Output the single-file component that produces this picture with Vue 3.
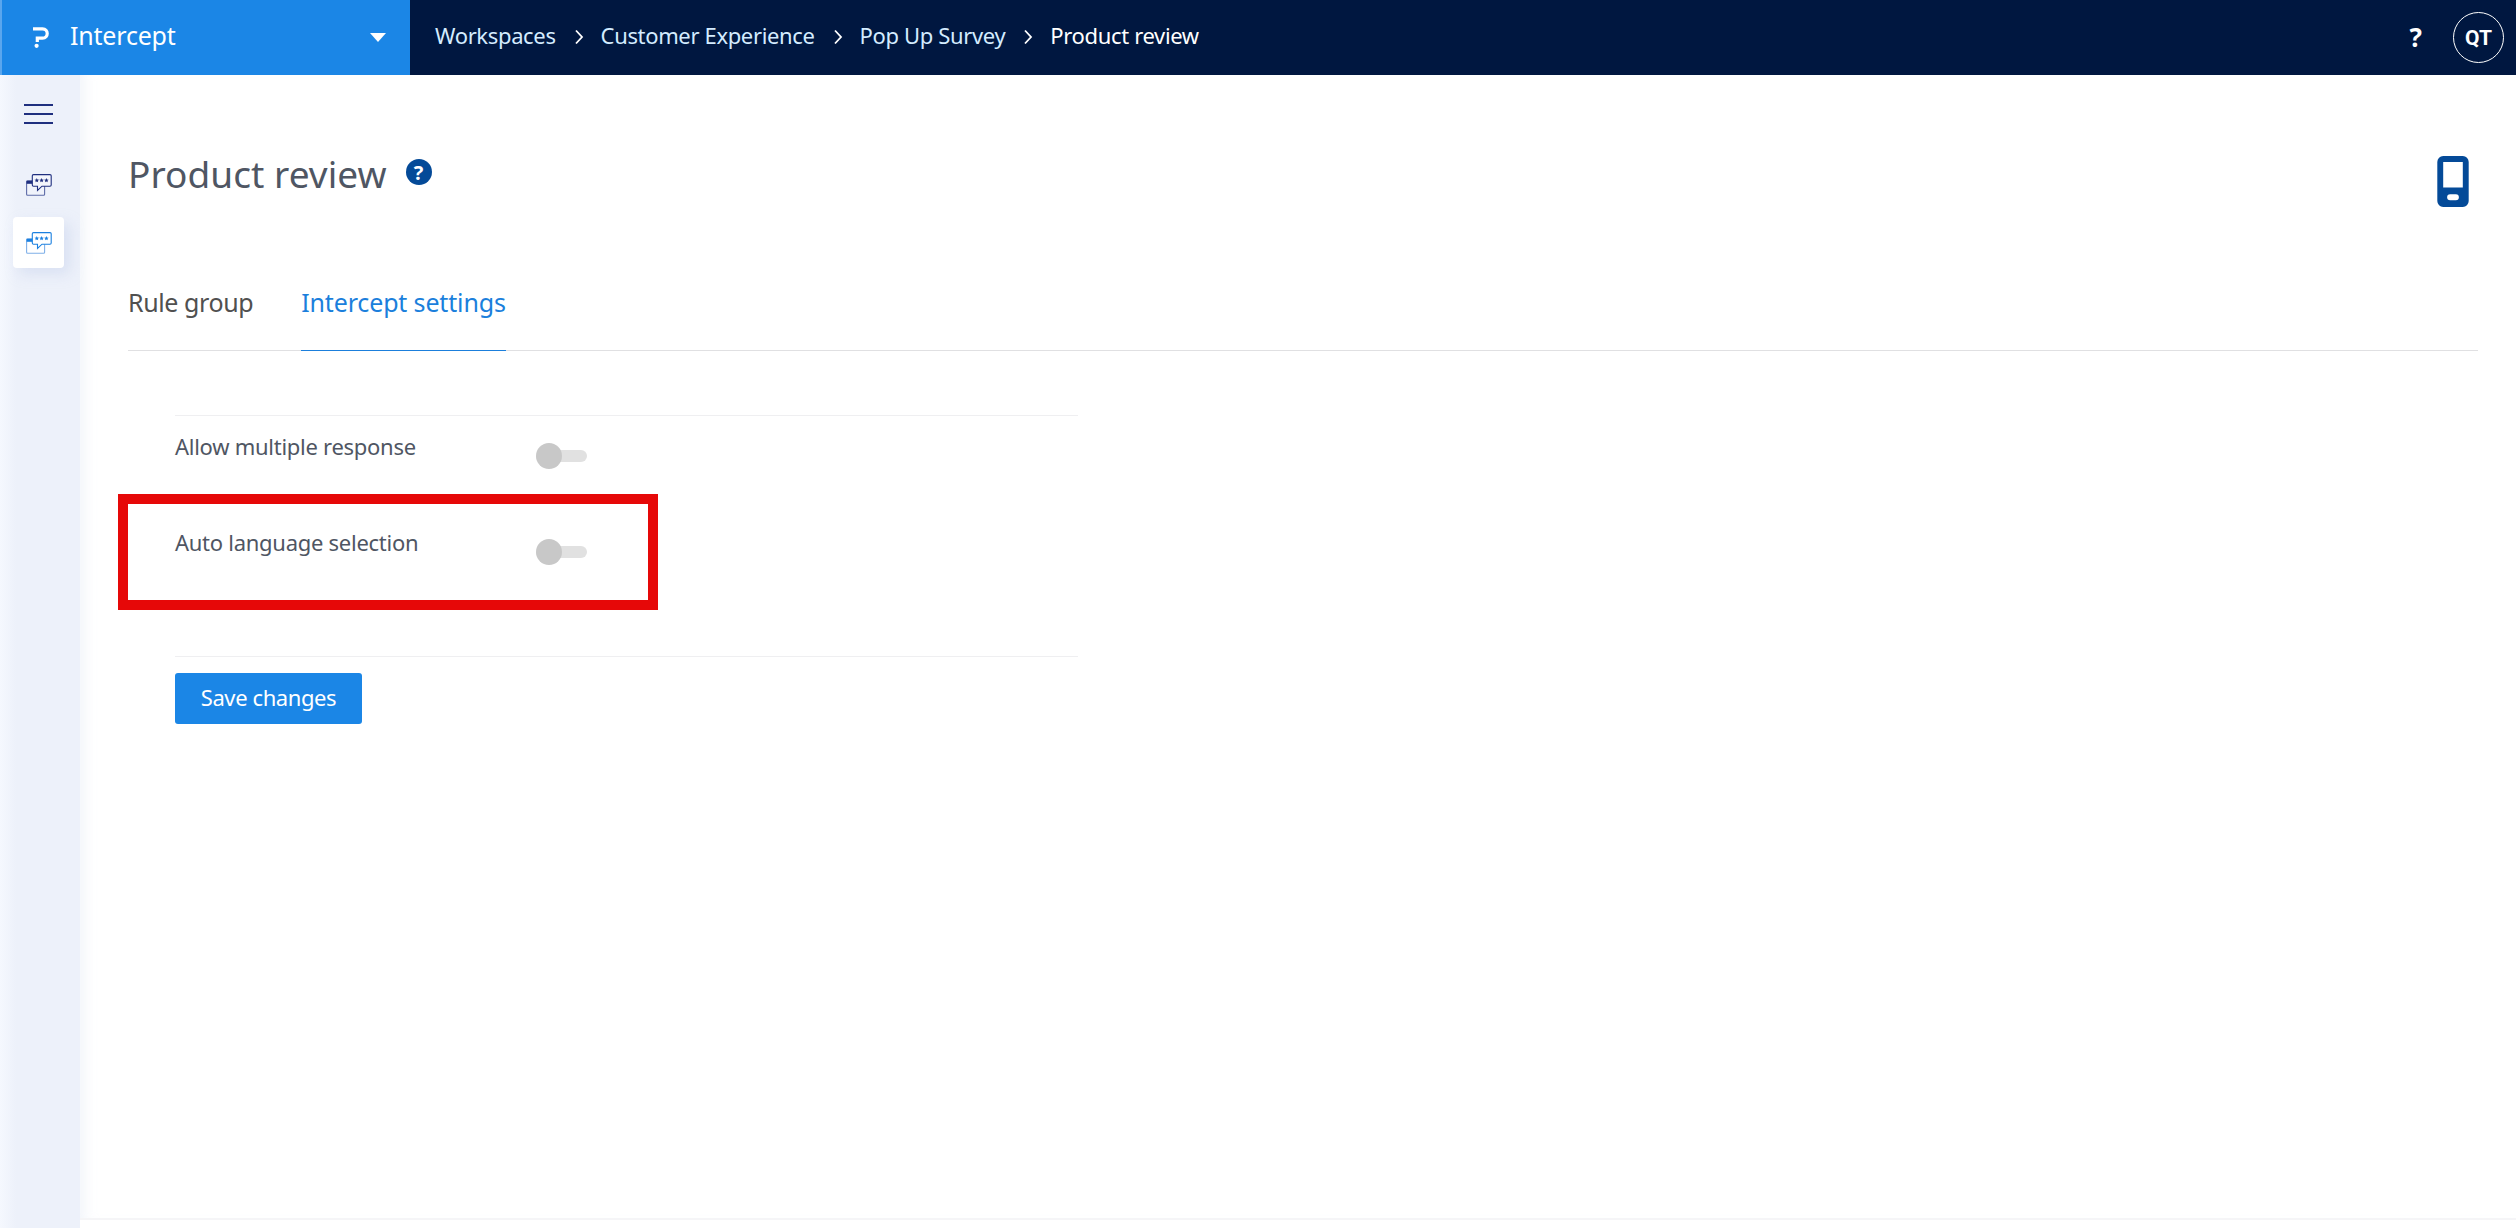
<script setup>
const crumbs = ['Workspaces', 'Customer Experience', 'Pop Up Survey']
const settings = [
  { label: 'Allow multiple response' },
  { label: 'Auto language selection' }
]
const starPath = (cx, cy) => {
  const r = 2.4
  const pts = []
  for (let i = 0; i < 10; i++) {
    const rad = i % 2 ? r * 0.45 : r
    const a = -Math.PI / 2 + (i * Math.PI) / 5
    pts.push((cx + rad * Math.cos(a)).toFixed(2) + ',' + (cy + rad * Math.sin(a)).toFixed(2))
  }
  return pts.join(' ')
}
const stars = [starPath(10.8, 6.4), starPath(15.6, 6.4), starPath(20.4, 6.4)]
</script>

<template>
  <div class="page">
    <header class="top">
      <div class="product">
        <svg class="logo" viewBox="0 0 16 21" width="16" height="21">
          <path d="M0 1.8H9.5C15.8 1.8 15.8 11.2 9.5 11.2H4.3V15" fill="none" stroke="#fff" stroke-width="3.2"/>
          <circle cx="3.6" cy="18.8" r="2.1" fill="#fff"/>
        </svg>
        <span class="product-name">Intercept</span>
        <span class="caret"></span>
      </div>
      <nav class="crumbs">
        <template v-for="c in crumbs" :key="c">
          <span class="crumb">{{ c }}</span>
          <svg class="chev" viewBox="0 0 10 16" width="10" height="16"><path d="M2 1.5L8 8L2 14.5" fill="none" stroke="#fff" stroke-width="1.8"/></svg>
        </template>
        <span class="crumb current">Product review</span>
      </nav>
      <div class="top-right">
        <span class="q">?</span>
        <span class="avatar">QT</span>
      </div>
    </header>
    <div class="body">
      <aside class="side">
        <div class="burger"><i></i><i></i><i></i></div>
        <div class="side-item first">
          <svg viewBox="0 0 26 22" width="26" height="22">
            <rect x="0.6" y="6.8" width="18" height="14.4" rx="1" fill="#f0f3fb" stroke="#5d6ba8" stroke-width="1.1"/>
            <rect x="0.6" y="6.8" width="7" height="3" fill="#1f2f7f"/>
            <path d="M7.5 0.6H24a1.2 1.2 0 0 1 1.2 1.2V11a1.2 1.2 0 0 1-1.2 1.2H16L11.5 16.5V12.2H7.5A1.2 1.2 0 0 1 6.3 11V1.8A1.2 1.2 0 0 1 7.5 0.6Z" fill="#f4f6fc" stroke="#1f2f7f" stroke-width="1.1"/>
            <polygon v-for="s in stars" :key="s" :points="s" fill="#1f2f7f"/>
          </svg>
        </div>
        <div class="side-item active">
          <svg viewBox="0 0 26 22" width="26" height="22">
            <rect x="0.6" y="6.8" width="18" height="14.4" rx="1" fill="#fff" stroke="#7fb0e8" stroke-width="1.1"/>
            <rect x="0.6" y="6.8" width="7" height="3" fill="#1b80e0"/>
            <path d="M7.5 0.6H24a1.2 1.2 0 0 1 1.2 1.2V11a1.2 1.2 0 0 1-1.2 1.2H16L11.5 16.5V12.2H7.5A1.2 1.2 0 0 1 6.3 11V1.8A1.2 1.2 0 0 1 7.5 0.6Z" fill="#fff" stroke="#1b80e0" stroke-width="1.1"/>
            <polygon v-for="s in stars" :key="s" :points="s" fill="#1b80e0"/>
          </svg>
        </div>
      </aside>
      <main class="main">
        <div class="title-row">
          <h1 class="title">Product review</h1>
          <span class="help">?</span>
          <svg class="phone" viewBox="0 0 32 52" width="32" height="51">
            <path fill-rule="evenodd" d="M6 0H26A6 6 0 0 1 32 6V46A6 6 0 0 1 26 52H6A6 6 0 0 1 0 46V6A6 6 0 0 1 6 0ZM6 6V32H26V6ZM13 39A3 3 0 0 0 13 45H19A3 3 0 0 0 19 39Z" fill="#044a98"/>
          </svg>
        </div>
        <div class="tabs">
          <span class="tab">Rule group</span>
          <span class="tab on">Intercept settings</span>
        </div>
        <section class="form">
          <div v-for="s in settings" :key="s.label" class="row">
            <span class="row-label">{{ s.label }}</span>
            <span class="toggle"><span class="knob"></span></span>
          </div>
          <div class="actions">
            <button class="save">Save changes</button>
          </div>
        </section>
        <div class="mark"></div>
      </main>
    </div>
  </div>
</template>

<style>
html, body { margin: 0; padding: 0; background: #fff; }
</style>

<style scoped>
* { box-sizing: border-box; }
.page { width: 2516px; height: 1228px; display: flex; flex-direction: column; overflow: hidden; font-family: "Noto Sans", "Open Sans", sans-serif; }
.top { height: 75px; background: #001740; display: flex; align-items: center; flex: none; }
.product { width: 410px; height: 75px; background: #1b86e6; border-left: 2px solid #5aa6ee; display: flex; align-items: center; padding-left: 31px; color: #fff; }
.product-name { font-size: 25px; margin-left: 21px; flex: 1; letter-spacing: -0.2px; padding-bottom: 6px; }
.caret { width: 0; height: 0; border-left: 8px solid transparent; border-right: 8px solid transparent; border-top: 9px solid #fff; margin-right: 24px; }
.crumbs { display: flex; align-items: center; margin-left: 25px; flex: 1; padding-bottom: 5px; }
.crumb { font-size: 22px; color: #d4ecff; letter-spacing: -0.35px; }
.crumb.current { color: #fff; }
.chev { margin: 4px 17px 0 18px; }
.top-right { display: flex; align-items: center; margin-right: 12px; }
.q { color: #fff; font-size: 26px; font-weight: 700; margin-right: 31px; padding-bottom: 2px; }
.avatar { width: 51px; height: 51px; border: 1.5px solid #fff; border-radius: 50%; display: flex; align-items: center; justify-content: center; color: #fff; font: 700 21px Roboto, sans-serif; }
.body { flex: 1; display: flex; min-height: 0; }
.side { width: 80px; flex: none; background: linear-gradient(90deg, #f5f8fe 0, #edf1fa 20%); display: flex; flex-direction: column; align-items: center; padding-right: 3px; }
.burger { margin-top: 29px; width: 29px; height: 20px; display: flex; flex-direction: column; justify-content: space-between; }
.burger i { display: block; height: 2px; background: #1f2f7f; }
.side-item { width: 51px; height: 51px; display: flex; align-items: center; justify-content: center; border-radius: 4px; }
.side-item.first { margin-top: 35px; }
.side-item.active { margin-top: 7px; background: #fff; box-shadow: 6px 6px 14px rgba(180, 195, 230, .35); }
.main { flex: 1; position: relative; padding: 0 38px 0 48px; border-bottom: 2px solid #f5f5f7; margin-bottom: 8px; box-shadow: inset 14px 0 14px -10px rgba(225, 230, 245, .45); }
.title-row { display: flex; align-items: center; height: 68px; margin-top: 64px; }
.title { margin: 0; font-size: 37px; font-weight: 400; color: #4f5663; letter-spacing: 0.05px; }
.help { width: 26px; height: 26px; border-radius: 50%; background: #044a98; color: #fff; font-size: 20px; font-weight: 700; display: flex; align-items: center; justify-content: center; margin-left: 19px; margin-top: -2px; }
.phone { margin-left: auto; margin-right: 9px; align-self: flex-end; }
.tabs { display: flex; gap: 48px; margin-top: 69px; height: 75px; border-bottom: 1px solid #e0e0e2; }
.tab { font-size: 25px; color: #505050; height: 75px; padding-top: 9px; letter-spacing: -0.4px; }
.tab.on { color: #1b7fdc; border-bottom: 1px solid #1b7fdc; letter-spacing: -0.15px; }
.form { margin-left: 47px; width: 903px; margin-top: 64px; border-top: 1px solid #efeff1; }
.row { display: flex; align-items: flex-start; height: 96px; }
.row-label { width: 361px; font-size: 22px; color: #4f5663; padding-top: 15px; letter-spacing: -0.27px; }
.toggle { margin-top: 34px; margin-left: 0; width: 51px; height: 12px; background: #e1e1e1; border-radius: 6px; position: relative; }
.knob { position: absolute; left: 0; top: -7px; width: 26px; height: 26px; border-radius: 50%; background: #c8c8c8; }
.actions { border-top: 1px solid #efeff1; margin-top: 48px; padding-top: 16px; }
.save { width: 187px; height: 51px; border: 0; border-radius: 3px; background: #1b86e6; color: #fff; font: 400 22px "Noto Sans", sans-serif; letter-spacing: -0.4px; padding: 0 0 4px; }
.mark { position: absolute; left: 38px; top: 419px; width: 540px; height: 116px; border: 10px solid #e60808; pointer-events: none; }
</style>
